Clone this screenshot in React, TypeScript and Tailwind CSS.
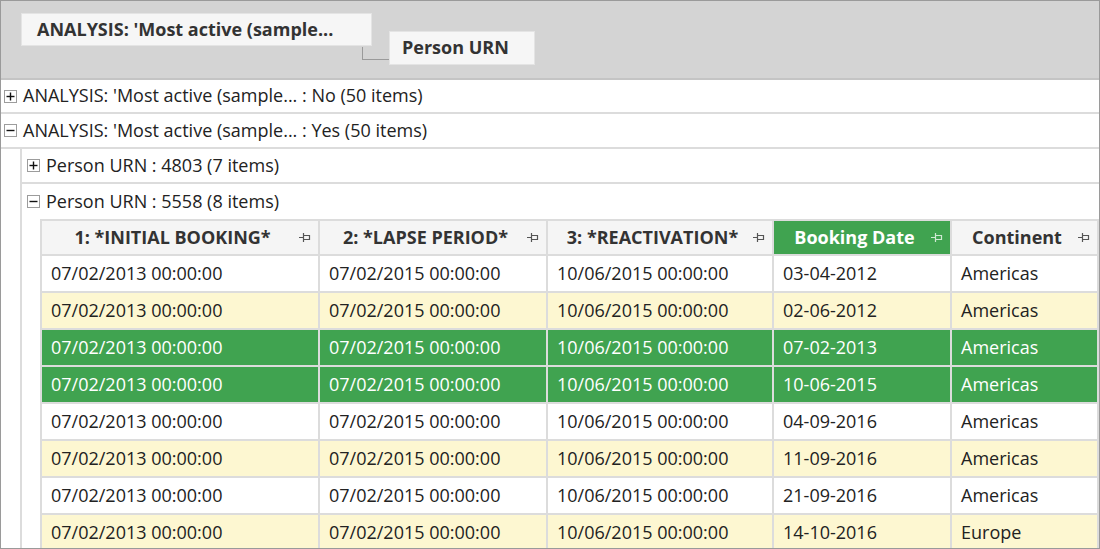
import React from "react";

const PinIcon = ({ color = "#555" }: { color?: string }) => (
  <svg width="12" height="11" viewBox="0 0 12 11" fill="none" stroke={color} strokeWidth="1.2">
    <path d="M0 5.5H4.5M4.5 1V10M4.5 3.5H10.5M4.5 7.5H10.5M10.5 3V8" />
  </svg>
);

const ToggleBox = ({ open }: { open: boolean }) => (
  <span className="inline-flex w-[13px] h-[13px] border border-[#9c9c9c] bg-white items-center justify-center shrink-0">
    <svg width="11" height="11" viewBox="0 0 11 11" stroke="#111" strokeWidth="1.4">
      <path d="M1.5 5.5H9.5" />
      {!open && <path d="M5.5 1.5V9.5" />}
    </svg>
  </span>
);

const columns = [
  { title: "1: *INITIAL BOOKING*", active: false },
  { title: "2: *LAPSE PERIOD*", active: false },
  { title: "3: *REACTIVATION*", active: false },
  { title: "Booking Date", active: true },
  { title: "Continent", active: false },
];

type Row = { date: string; continent: string; tone: "white" | "yellow" | "green" };

const rows: Row[] = [
  { date: "03-04-2012", continent: "Americas", tone: "white" },
  { date: "02-06-2012", continent: "Americas", tone: "yellow" },
  { date: "07-02-2013", continent: "Americas", tone: "green" },
  { date: "10-06-2015", continent: "Americas", tone: "green" },
  { date: "04-09-2016", continent: "Americas", tone: "white" },
  { date: "11-09-2016", continent: "Americas", tone: "yellow" },
  { date: "21-09-2016", continent: "Americas", tone: "white" },
  { date: "14-10-2016", continent: "Europe", tone: "yellow" },
];

const toneClass = {
  white: "bg-white text-[#222]",
  yellow: "bg-[#fdf7d1] text-[#222]",
  green: "bg-[#40a350] text-white",
};

export default function App() {
  return (
    <div className="w-[1100px] h-[549px] overflow-hidden border border-[#9a9a9a] bg-white font-['Open_Sans','Noto_Sans',sans-serif] text-[18px] text-[#222] leading-none">
      {/* group by panel */}
      <div className="relative h-[79px] bg-[#d4d4d4] border-b-2 border-[#c4c4c4] flex items-start">
        <div className="ml-[20px] mt-[12px] h-[33px] w-[351px] bg-[#f6f6f6] border border-[#e4e4e4] flex items-center pl-[15px] pb-[2px] font-bold text-[#333]">
          ANALYSIS: 'Most active (sample...
        </div>
        <div className="ml-[17px] mt-[30px] h-[34px] w-[146px] bg-[#f6f6f6] border border-[#e4e4e4] flex items-center pl-[12px] pb-[2px] font-bold text-[#333]">
          Person URN
        </div>
        <div className="absolute left-[361px] top-[46px] w-[27px] h-[13px] border-l border-b border-[#9a9a9a]" />
      </div>

      {/* level 1 rows */}
      <div className="h-[34px] border-b-2 border-[#dcdcdc] flex items-center gap-[6px] pl-[3px]">
        <ToggleBox open={false} />
        <span className="pb-[2px]">ANALYSIS: 'Most active (sample... : No (50 items)</span>
      </div>
      <div className="h-[35px] border-b-2 border-[#dcdcdc] flex items-center gap-[6px] pl-[3px]">
        <ToggleBox open={true} />
        <span className="pb-[2px]">ANALYSIS: 'Most active (sample... : Yes (50 items)</span>
      </div>

      {/* level 2 */}
      <div className="ml-[19px] border-l-2 border-[#dcdcdc]">
        <div className="h-[35px] border-b-2 border-[#dcdcdc] flex items-center gap-[6px] pl-[5px]">
          <ToggleBox open={false} />
          <span className="pb-[2px]">Person URN : 4803 (7 items)</span>
        </div>
        <div className="h-[35px] flex items-center gap-[6px] pl-[5px]">
          <ToggleBox open={true} />
          <span className="pb-[2px]">Person URN : 5558 (8 items)</span>
        </div>

        {/* table */}
        <div className="ml-[18px] border-l-2 border-t-2 border-[#dcdcdc]">
          <div className="grid grid-cols-[278px_228px_226px_178px_1fr]">
            {columns.map((c) => (
              <div
                key={c.title}
                className={`h-[35px] flex items-center border-r-2 border-b-2 border-[#dcdcdc] font-bold ${
                  c.active ? "bg-[#40a350] text-white" : "bg-[#f5f5f5] text-[#333]"
                }`}
              >
                <span className="flex-1 text-center pl-[8px] pb-[2px]">{c.title}</span>
                <span className="pr-[7px] pl-[4px]">
                  <PinIcon color={c.active ? "#cfe9d3" : "#555"} />
                </span>
              </div>
            ))}
            {rows.map((r, i) => (
              <React.Fragment key={i}>
                {["07/02/2013 00:00:00", "07/02/2015 00:00:00", "10/06/2015 00:00:00", r.date, r.continent].map(
                  (v, j) => (
                    <div
                      key={j}
                      className={`h-[37px] flex items-center pl-[9px] pb-[2px] border-r-2 border-b-2 border-[#dcdcdc] ${toneClass[r.tone]}`}
                    >
                      {v}
                    </div>
                  )
                )}
              </React.Fragment>
            ))}
          </div>
        </div>
      </div>
    </div>
  );
}
